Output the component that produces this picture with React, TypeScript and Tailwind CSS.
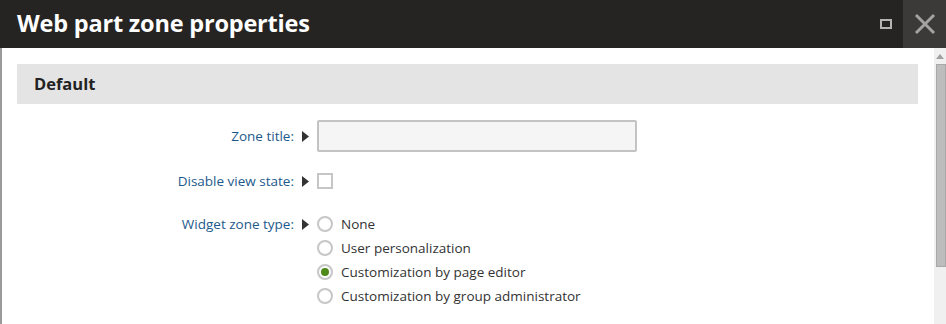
import React from "react";

const font = { fontFamily: '"Open Sans", "Noto Sans", sans-serif' };

function Arrow() {
  return (
    <svg width="7" height="11" viewBox="0 0 7 11" className="shrink-0">
      <path d="M0 0 L7 5.5 L0 11 Z" fill="#333" />
    </svg>
  );
}

function Radio({ checked }: { checked?: boolean }) {
  return (
    <span className="w-[16px] h-[16px] rounded-full border-2 border-[#c6c6c6] bg-white flex items-center justify-center shrink-0">
      {checked && <span className="w-[8px] h-[8px] rounded-full bg-[#4d8a1a]" />}
    </span>
  );
}

export default function App() {
  const options = [
    "None",
    "User personalization",
    "Customization by page editor",
    "Customization by group administrator",
  ];

  return (
    <div className="w-[946px] h-[324px] overflow-hidden bg-white flex flex-col" style={font}>
      <div className="h-[48px] bg-[#262422] flex items-center shrink-0">
        <h1 className="ml-[17px] text-white text-[23.5px] font-bold tracking-[-0.2px]">
          Web part zone properties
        </h1>
        <div className="ml-auto flex items-center h-full">
          <span className="w-[12px] h-[10px] border-2 border-[#b4b4b4] mr-[11px]" />
          <div className="w-[43px] h-full bg-[#3c3a38] flex items-center justify-center">
            <svg width="22" height="22" viewBox="0 0 22 22">
              <path d="M2 2 L20 20 M20 2 L2 20" stroke="#a3a3a3" strokeWidth="3" />
            </svg>
          </div>
        </div>
      </div>

      <div className="flex flex-1 min-h-0">
        <div className="w-[2px] bg-[#9a9a9a]" />
        <div className="flex-1 pl-[15px] pt-[16px] pr-[16px]">
          <div className="h-[40px] bg-[#e4e4e4] flex items-center pl-[17px]">
            <span className="text-[16.5px] font-bold text-[#222]">Default</span>
          </div>

          <div className="mt-[16px] text-[13.5px]">
            <div className="flex items-center h-[32px]">
              <div className="w-[285px] text-right pr-[8px] text-[#1d5a8b]">Zone title:</div>
              <Arrow />
              <div className="ml-[8px] w-[320px] h-[32px] rounded-[2px] border-2 border-[#c3c3c3] bg-[#f5f5f5]" />
            </div>

            <div className="flex items-center h-[18px] mt-[20px]">
              <div className="w-[285px] text-right pr-[8px] text-[#1d5a8b]">Disable view state:</div>
              <Arrow />
              <span className="ml-[8px] w-[16px] h-[16px] border-2 border-[#c6c6c6] bg-white" />
            </div>

            <div className="flex items-start mt-[22px]">
              <div className="w-[285px] h-[24px] flex items-center justify-end pr-[8px] text-[#1d5a8b]">
                Widget zone type:
              </div>
              <div className="h-[24px] flex items-center">
                <Arrow />
              </div>
              <div className="ml-[8px] flex flex-col">
                {options.map((o, i) => (
                  <div key={o} className="flex items-center h-[24px] gap-[8px] text-[#333]">
                    <Radio checked={i === 2} />
                    <span>{o}</span>
                  </div>
                ))}
              </div>
            </div>
          </div>
        </div>

        <div className="w-[12px] bg-[#f0f0f0] flex flex-col items-end">
          <div className="w-full h-[16px] flex items-center justify-center">
            <svg width="8" height="5" viewBox="0 0 8 5">
              <path d="M0 5 L4 0 L8 5 Z" fill="#a0a0a0" />
            </svg>
          </div>
          <div className="w-[10px] h-[203px] bg-[#bdbdbd] border border-[#a8a8a8]" />
        </div>
      </div>
    </div>
  );
}
